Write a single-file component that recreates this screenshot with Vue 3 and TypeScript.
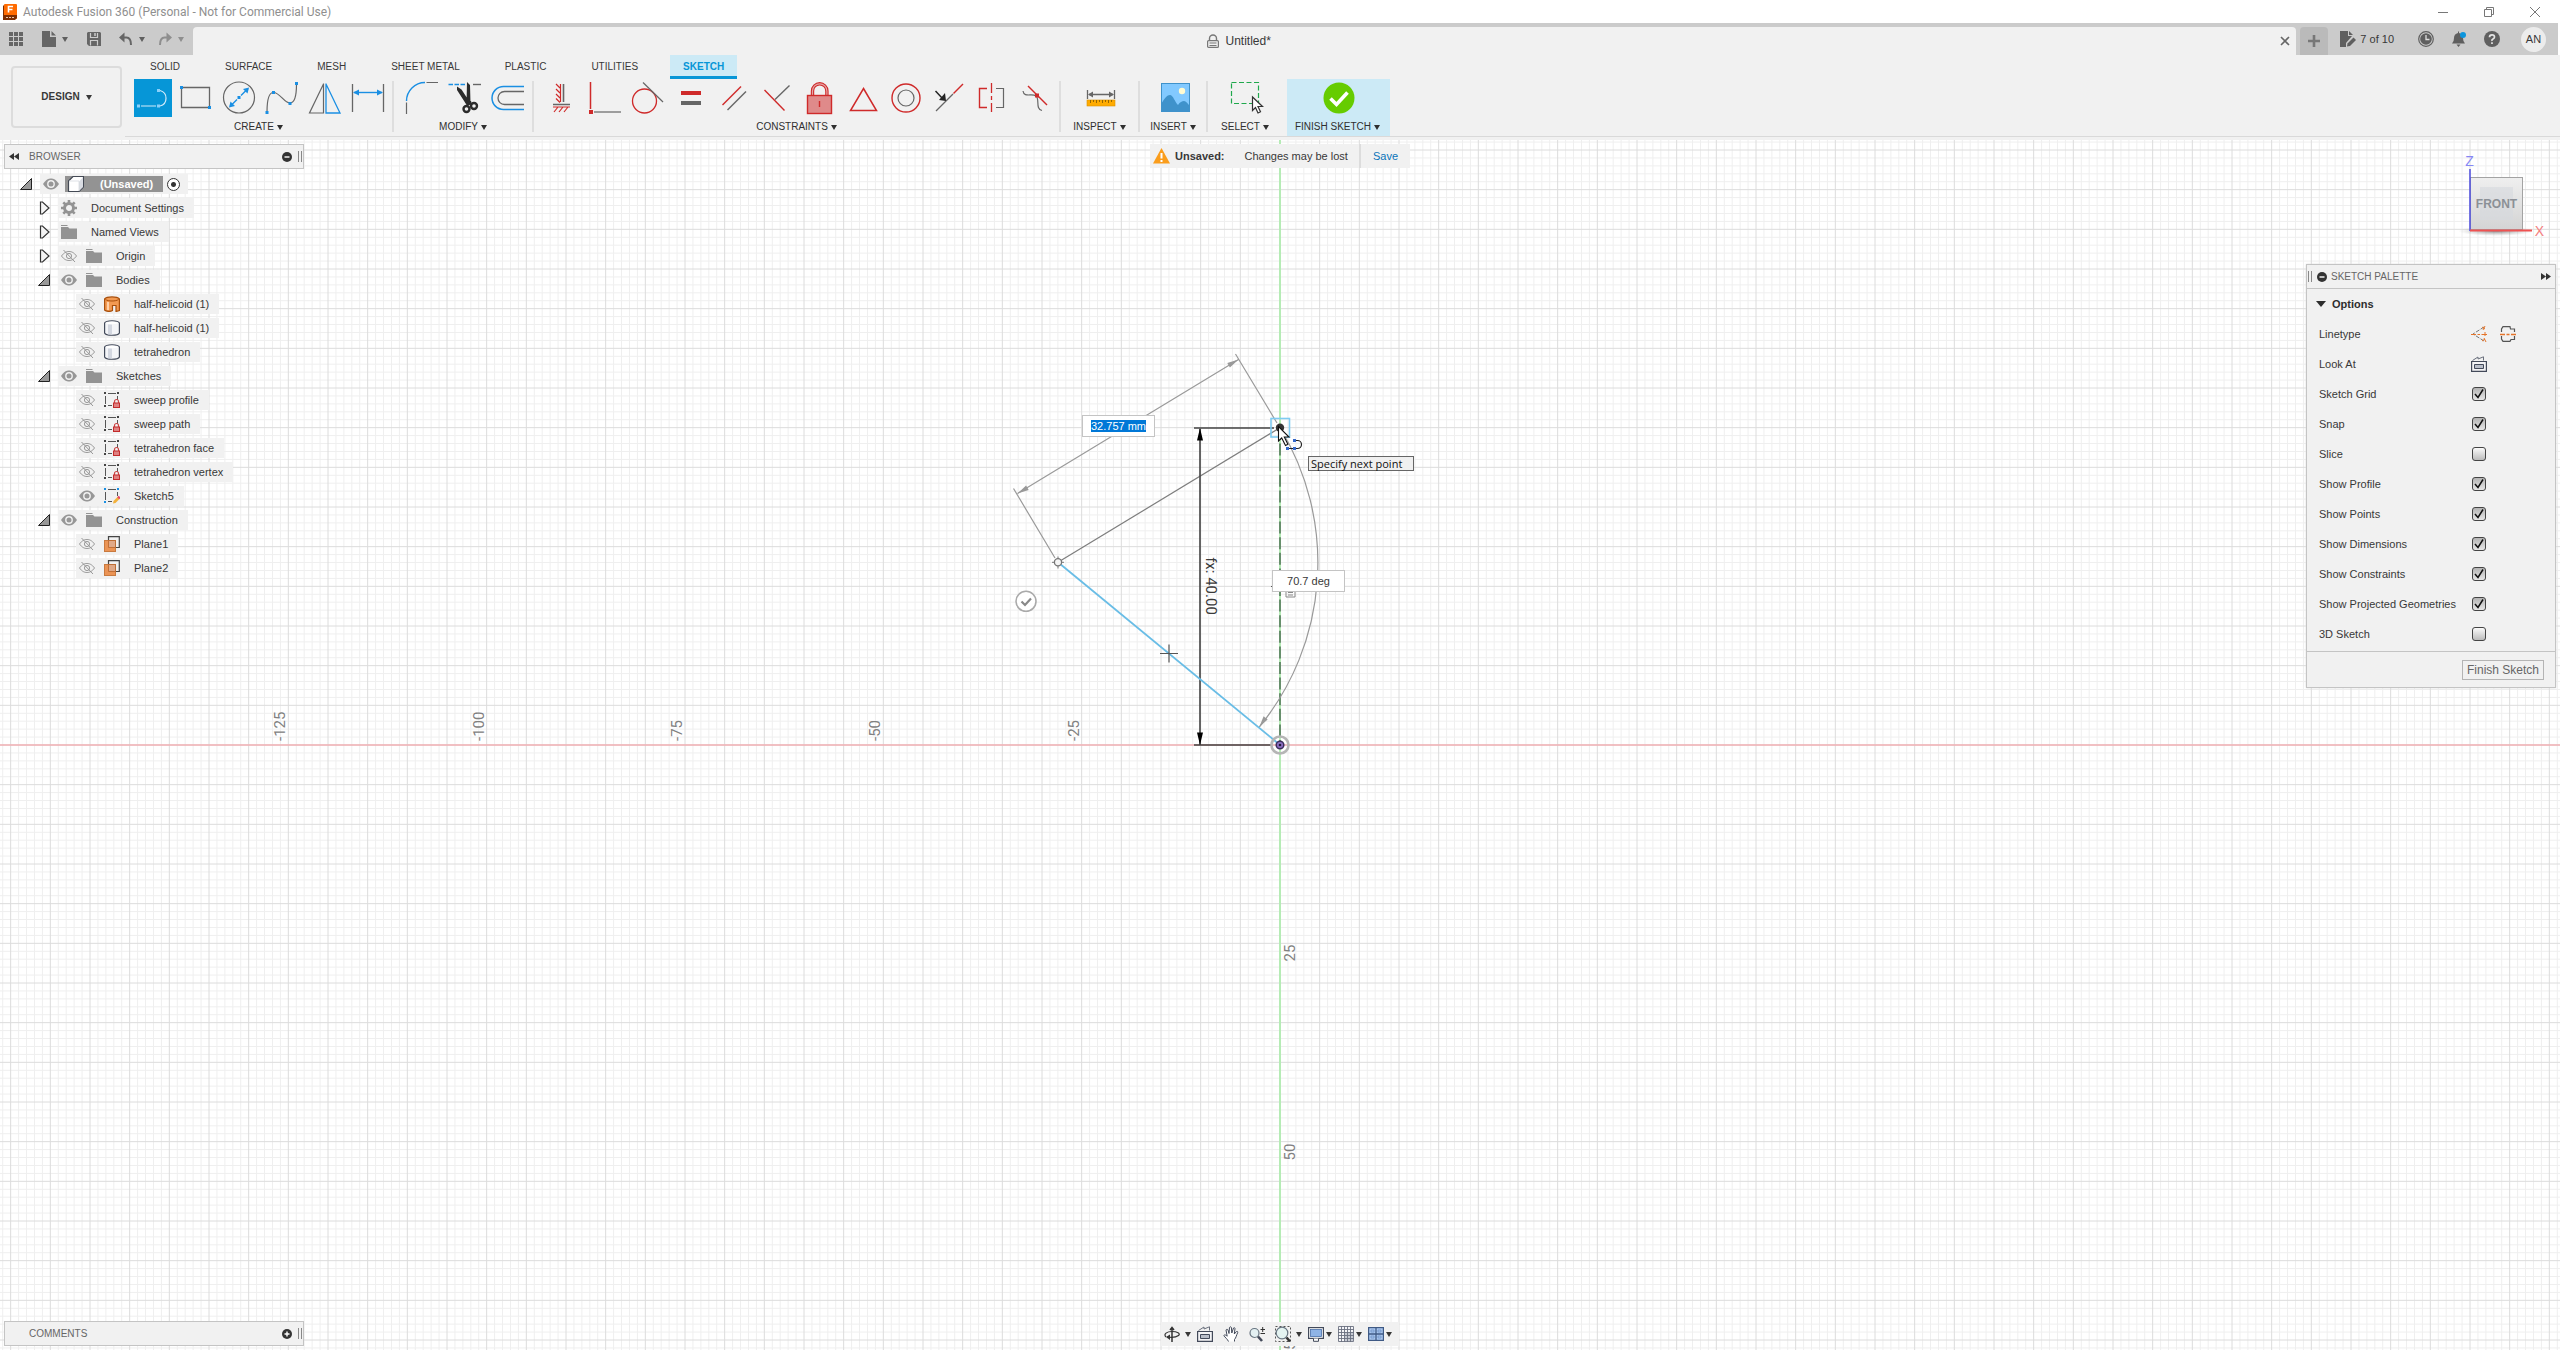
<script setup lang="ts">
import { ref, onMounted } from 'vue'

interface Tool { name: string; icon: string; active?: boolean }
interface Group { label: string; kind: string; tools: Tool[] }
interface Node {
  label: string; level: number; fold?: 'open' | 'closed'; eye?: 'on' | 'off'; icon: string
}

const B = '#1a8fe3'
const G = '#666'
const R = '#cf2a2a'
const sq = (x: number, y: number, c = B) => `<rect x="${x - 1.5}" y="${y - 1.5}" width="3" height="3" fill="${c}"/>`
const ln = (d: string, c = G, w = 1.2) => `<path d="${d}" fill="none" stroke="${c}" stroke-width="${w}"/>`

const t = (name: string, icon: string, active = false): Tool => ({ name, icon, active })

const groups: Group[] = [
  {
    label: 'CREATE', kind: 'wide', tools: [
      t('Line', ln('M7 27H22M26 11.500a8 8 0 0 1 0 15.500', '#d4ecfa') + sq(24.5, 11.5, '#8ad0fa') + sq(4.5, 27, '#8ad0fa') + sq(24.5, 27, '#8ad0fa'), true),
      t('Rectangle', ln('M4.500 8.500H32.500V28.500H4.500Z', G, 1.3) + sq(4.5, 8.5) + sq(32.5, 28.5)),
      t('Circle', ln('M34.500 18.500a15.500 15.500 0 1 1-31 0a15.500 15.500 0 1 1 31 0Z') + ln('M10 27.500L17 20.500M21 16.500L28 9.500', B, 1.4) + `<path d="M9 28.500l1.500-6 4.500 4.500ZM29 8.500l-1.500 6-4.500-4.500Z" fill="${B}"/>` + sq(19, 18.5)),
      t('Spline', ln('M4 33C4 20 6 13.500 10.500 13.500C17 13.500 21 24 27 24C32 24 33.500 14 33.500 5') + sq(4, 33.5) + sq(10.5, 13.5) + sq(27, 24.5) + sq(33.5, 4.5)),
      t('Mirror', ln('M17.500 4.500V34H3.500L17.500 5') + ln('M20 4.500V34H34L20 5', B, 1.3)),
      t('Sketch Dimension', ln('M3.500 5V33M34.500 5V33', G, 1.3) + ln('M5 13.500H33', B, 1.4) + `<path d="M4 13.500l6-3v6ZM34 13.500l-6-3v6Z" fill="${B}"/>`),
    ],
  },
  {
    label: 'MODIFY', kind: 'wide', tools: [
      t('Fillet', ln('M3.500 22A18.500 18.500 0 0 1 22 3.500', B, 1.4) + ln('M23.500 3.500H35M3.500 23.500V35')),
      t('Trim', ln('M2.500 5.500h4.500m1.500 0h4.500m1.500 0h4.500', B, 1.5) + ln('M27 5.500H35', G, 1.4)
        + '<path d="M11 7.500l4.500 3L23 22l-3 3-9-14Z M21 3l3 3 .5 18-4 2Z" fill="#2b2b2b"/><circle cx="20.500" cy="30" r="3" fill="none" stroke="#2b2b2b" stroke-width="2.400"/><circle cx="28" cy="27" r="3" fill="none" stroke="#2b2b2b" stroke-width="2.400" /><path d="M19 22l6 0 1 3-5 2Z" fill="#2b2b2b"/>'),
      t('Offset', ln('M35 7.500H14.500a11.500 11.500 0 0 0 0 23H35', B, 1.5) + ln('M35 12.500H15.500a6.500 6.500 0 0 0 0 13H35', G, 1.3)),
    ],
  },
  {
    label: 'CONSTRAINTS', kind: 'wide', tools: [
      t('Horizontal/Vertical', ln('M20.500 5V23M10 25.500H27', G, 1.6) + ln('M17.500 5V23M17 9l-4-4M17 14l-4-4M17 19l-4-4M17 23.500l-4-4M10 28H27M15 28l-4 5M20 28l-4 5M25 28l-4 5', R)),
      t('Coincident', ln('M4.500 3V30', R, 1.5) + `<rect x="3" y="31" width="4" height="4" fill="${R}"/>` + ln('M8 33H35')),
      t('Tangent', `<circle cx="15.500" cy="22" r="12" fill="none" stroke="${R}" stroke-width="1.300"/>` + ln('M14 3.500L34 23')),
      t('Equal', `<rect x="9" y="12" width="20" height="4" fill="${R}"/><rect x="9" y="22" width="20" height="4" fill="${G}"/>`),
      t('Parallel', ln('M7.500 26L26 7.500', R, 1.4) + ln('M12.500 31L31 12.500', G, 1.4)),
      t('Perpendicular', ln('M6.500 11L26.500 31.500', R, 1.4) + ln('M17 20.500L31.500 6.500', G, 1.4)),
      t('Fix/UnFix', ln('M11.500 16V12a7.200 7.200 0 0 1 14.400 0V16', R, 3.4) + ln('M11.500 16V12a7.200 7.200 0 0 1 14.400 0V16', '#e6a5a5', 1.2) + `<rect x="6.500" y="16.500" width="24" height="18" fill="#df8a8a" stroke="${R}" stroke-width="1.400"/>` + ln('M18.500 22V28', R, 1.4)),
      t('Midpoint Triangle', ln('M19.500 9.500L32.500 31.500H6.500Z', R, 1.5)),
      t('Concentric', `<circle cx="19" cy="19" r="14" fill="none" stroke="${R}" stroke-width="1.400"/><circle cx="19" cy="19" r="8" fill="none" stroke="${G}" stroke-width="1.200"/>`),
      t('Midpoint', ln('M6 32L23 15') + ln('M23.500 14.500L33 5', R, 1.4) + ln('M5.500 12L13 20', '#222', 1.5) + '<path d="M16 22l-1-8-6 7Z" fill="#222"/>'),
      t('Symmetry', ln('M14 9.500H6.500V28.500H14', R, 1.4) + ln('M23 9.500H30.500V28.500H23') + ln('M18.500 4v10m0 3v4m0 3v9', R, 1.3)),
      t('Curvature', ln('M7 12C8 19 16 14 20 17C24 20 19 30 26 31.500') + ln('M12 7L31 26', R, 1.4) + `<rect x="19" y="14.500" width="4" height="4" fill="${R}"/>`),
    ],
  },
  {
    label: 'INSPECT', kind: 'inspect', tools: [
      t('Measure', ln('M5.500 11V20M32.500 11V20M7 15.500H31', G, 1.3) + '<path d="M6 15.500l5-3v6ZM32 15.500l-5-3v6Z" fill="#666"/><rect x="5" y="21" width="28" height="6" fill="#ffab00" stroke="#d99100" stroke-width=".6"/>' + ln('M8.500 21v3m3-3v2m3-2v3m3-3v2m3-2v3m3-3v2m3-2v3m3-3v2', '#8a5d00', .9)),
    ],
  },
  {
    label: 'INSERT', kind: 'insert', tools: [
      t('Insert Canvas', '<rect x="5" y="4" width="29" height="29" fill="#82c9ff"/><path d="M5 25C9 19 11 16 14 16S19 23 22 26C24 23 26 22 28 22S32 25 34 27V33H5Z" fill="#3f92cb"/><rect x="5.500" y="4.500" width="28" height="28" fill="none" stroke="#3f92cb"/><circle cx="26" cy="12" r="3.200" fill="#fffbd2"/>'),
    ],
  },
  {
    label: 'SELECT', kind: 'select', tools: [
      t('Select', '<rect x="3.500" y="3.500" width="27" height="21" fill="none" stroke="#1fa84c" stroke-width="1.200" stroke-dasharray="5 2.500"/><path d="M24.500 18V31.500l3-3 2.500 5.500 2.500-1.200-2.500-5.300h4.500Z" fill="#fff" stroke="#333" stroke-width="1.200"/>'),
    ],
  },
  {
    label: 'FINISH SKETCH', kind: 'finish', tools: [
      t('Finish Sketch', '<circle cx="19" cy="19" r="15.500" fill="#66cc00"/><path d="M10.500 19.500l6 6L27.500 13.500" fill="none" stroke="#fff" stroke-width="3.600"/>'),
    ],
  },
]

const tabs = ['SOLID', 'SURFACE', 'MESH', 'SHEET METAL', 'PLASTIC', 'UTILITIES', 'SKETCH']

const lockSketch = ln('M4 1.500H12M1.500 4V12M13.500 4V8M4 13.500H8', '#555', 1)
  + '<path d="M0 0h2v2H0ZM13 0h2v2h-2ZM0 13h2v2H0Z" fill="#444"/>'
  + '<path d="M10.500 11V9.500a2 2 0 0 1 4 0V11" fill="none" stroke="#c44" stroke-width="1.200"/><rect x="9.500" y="11" width="6" height="4.500" fill="#df8080" stroke="#c22b2b"/>'
const body = '<path d="M.6 3C2 0 14 0 15.400 3V13C14 16 2 16 .6 13Z" fill="#f4f5f8" stroke="#434a5a" stroke-width="1.200"/><path d="M4 4.500H8V14.500H4Z" fill="#d3d7e0"/><path d="M1.600 3C4 4.600 12 4.600 14.400 3C12 1.200 4 1.200 1.600 3Z" fill="#fff"/>'
const treeIcons: Record<string, string> = {
  cube: '<path d="M.5 5L5 .5H15.500V11L11 15.500H.5Z" fill="#fff" stroke="#444a55" stroke-width="1.200"/><path d="M11 5.500L15 1.500V11L11 15Z" fill="#d9dce2"/><path d="M1 5H11V15" fill="none" stroke="#d6d9e0" stroke-width=".8"/>',
  gear: '<circle cx="8" cy="8" r="4.500" fill="none" stroke="#939393" stroke-width="3"/><path d="M8 0V3M8 13V16M0 8H3M13 8H16M2.300 2.300L4.500 4.500M11.500 11.500L13.700 13.700M2.300 13.700L4.500 11.500M11.500 4.500L13.700 2.300" stroke="#939393" stroke-width="2.600"/>',
  folder: '<path d="M0 3H7L8.500 4.500H16V15H0Z" fill="#939393"/><path d="M0 1.500H6.500" stroke="#939393" stroke-width="1"/>',
  surface: '<path d="M.6 3C3 .2 13 .2 15.400 3V14.500L12 15.500V9.500H8.500V14.500C6 16 2 15.500 .6 14Z" fill="#f39a52" stroke="#a94f0b" stroke-width="1.200"/><path d="M1.500 3.500C4 5.500 12 5.500 14.500 3.500" fill="none" stroke="#a94f0b"/><path d="M4 6V14" stroke="#ffd0a8" stroke-width="2"/>',
  body,
  sketch: lockSketch,
  edit: ln('M4 1.500H12M1.500 4V12M13.500 4V8M4 13.500H8', '#555', 1) + `<path d="M0 0h2v2H0ZM13 0h2v2h-2ZM0 13h2v2H0Z" fill="${B}"/>` + '<path d="M9 15.500l.5-2.500L14 8.500l2 2L11.500 15Z" fill="#f3b13c"/><path d="M13.200 9.300L14.700 7.800l2 2L15.200 11.300Z" fill="#e5486b"/>',
  plane: '<path d="M4.500 4V.700H15.300V11.500H12" fill="none" stroke="#444" stroke-width="1.200"/><rect x=".5" y="4.500" width="11" height="11" fill="#eb9455" stroke="#c97a3f"/><path d="M4.500 4.500H11.500V11.500H4.500Z" fill="#e0a988" stroke="#b8642a" stroke-width=".8"/>',
}

const nodes: Node[] = [
  { label: 'Document Settings', level: 1, fold: 'closed', icon: 'gear' },
  { label: 'Named Views', level: 1, fold: 'closed', icon: 'folder' },
  { label: 'Origin', level: 1, fold: 'closed', eye: 'off', icon: 'folder' },
  { label: 'Bodies', level: 1, fold: 'open', eye: 'on', icon: 'folder' },
  { label: 'half-helicoid (1)', level: 2, eye: 'off', icon: 'surface' },
  { label: 'half-helicoid (1)', level: 2, eye: 'off', icon: 'body' },
  { label: 'tetrahedron', level: 2, eye: 'off', icon: 'body' },
  { label: 'Sketches', level: 1, fold: 'open', eye: 'on', icon: 'folder' },
  { label: 'sweep profile', level: 2, eye: 'off', icon: 'sketch' },
  { label: 'sweep path', level: 2, eye: 'off', icon: 'sketch' },
  { label: 'tetrahedron face', level: 2, eye: 'off', icon: 'sketch' },
  { label: 'tetrahedron vertex', level: 2, eye: 'off', icon: 'sketch' },
  { label: 'Sketch5', level: 2, eye: 'on', icon: 'edit' },
  { label: 'Construction', level: 1, fold: 'open', eye: 'on', icon: 'folder' },
  { label: 'Plane1', level: 2, eye: 'off', icon: 'plane' },
  { label: 'Plane2', level: 2, eye: 'off', icon: 'plane' },
]

const eyes = {
  on: '<path d="M0 8C3 3.500 5.500 2.500 8 2.500S13 3.500 16 8C13 12.500 10.500 13.500 8 13.500S3 12.500 0 8Z" fill="#979797"/><circle cx="8" cy="8" r="3.200" fill="#979797" stroke="#f1f1f1" stroke-width="1.400"/>',
  off: '<path d="M.5 8C3 4.500 5.500 3.500 8 3.500S13 4.500 15.500 8C13 11.500 10.500 12.500 8 12.500S3 11.500 .5 8Z" fill="none" stroke="#8f8f8f" stroke-width=".9"/><circle cx="8" cy="8" r="2.600" fill="none" stroke="#8f8f8f" stroke-width=".9"/><path d="M2.500 2L14 14" stroke="#8f8f8f" stroke-width=".9"/>',
}

const options = ref([
  { id: 'grid', label: 'Sketch Grid', on: true },
  { id: 'snap', label: 'Snap', on: true },
  { id: 'slice', label: 'Slice', on: false },
  { id: 'profile', label: 'Show Profile', on: true },
  { id: 'points', label: 'Show Points', on: true },
  { id: 'dims', label: 'Show Dimensions', on: true },
  { id: 'cons', label: 'Show Constraints', on: true },
  { id: 'proj', label: 'Show Projected Geometries', on: true },
  { id: 'three', label: '3D Sketch', on: false },
])

const lookAt = '<path d="M.6 5.500H15.400V15.400H.6Z" fill="#f4f4f6" stroke="#434a5a" stroke-width="1.200"/><path d="M3.500 8.500H12.500V12.500H3.500Z" fill="#b9bec9" stroke="#434a5a"/><path d="M1.500 4.500L7 1V3L12.500 .8V4.500" fill="none" stroke="#6a707d"/>'
const navTools = [
  { name: 'Orbit', drop: true, gap: 5, icon: '<path d="M8 16V2M6 4L8 1.500 10 4" fill="none" stroke="#333" stroke-width="1.500"/><path d="M2 11C-1 8 3 5.500 8 5.500S17 7.500 14.500 9.500 6 11.500 3 11" fill="none" stroke="#333" stroke-width="1.200"/><path d="M6 8.500V14L2 11Z" fill="#333"/>' },
  { name: 'Look At', drop: false, gap: 0, icon: lookAt },
  { name: 'Pan', drop: false, gap: 0, icon: '<path d="M5.500 15.500C4.500 13 2 11.500 .8 9.500C1.500 8.500 3 9 4.200 10.200L3 4C3.500 3 4.500 3 5 4L6 7.500 6.500 1.500C7 .6 8 .6 8.400 1.500L8.800 7 10.500 2C11.200 1.300 12 1.700 12 2.600L11.300 8 13.500 5.500C14.500 5 15 5.800 14.700 6.600C13.500 9 13 12 11.500 13.500V15.500" fill="#fff" stroke="#434a5a"/>' },
  { name: 'Zoom', drop: false, gap: 0, icon: '<circle cx="5.500" cy="7" r="4.500" fill="#e4f1f3" stroke="#687581" stroke-width="1.200"/><path d="M9 10.500L13 15" stroke="#434a5a" stroke-width="2.600"/><path d="M11.500 3.500H16M13.700 1V6M11.500 7.500H16" stroke="#333"/>' },
  { name: 'Fit', drop: true, gap: 5, icon: '<path d="M.5 .5H15.500V15.500H.5Z" fill="none" stroke="#555" stroke-dasharray="2 2"/><circle cx="7" cy="7" r="5.800" fill="#e4f3f1" stroke="#687581" stroke-width="1.200"/><path d="M11.500 11.500L15 15.500" stroke="#333" stroke-width="2.600"/>' },
  { name: 'Display Settings', drop: true, gap: 2, icon: '<rect x=".6" y="1.600" width="14.800" height="10.800" fill="#fff" stroke="#434a5a" stroke-width="1.200"/><rect x="2.500" y="3.500" width="11" height="7" fill="#8fb4e6" stroke="#4a6fa8" stroke-width=".8"/><path d="M5.500 12.500V15.300H10.500V12.500" fill="#fff" stroke="#434a5a"/>' },
  { name: 'Grid and Snaps', drop: true, gap: 2, icon: '<path d="M.5 .5H15.500V15.500H.5Z" fill="#f4f5f8"/><path d="M6 6H15V15H6Z" fill="#c6cad3"/><path d="M.5 .5H15.500V15.500H.5ZM3.500 0V16M6.500 0V16M9.500 0V16M12.500 0V16M0 3.500H16M0 6.500H16M0 9.500H16M0 12.500H16" fill="none" stroke="#6b7080" stroke-width=".9"/>' },
  { name: 'Viewports', drop: true, gap: 2, icon: '<rect x=".6" y="1.600" width="14.800" height="12.800" fill="#a9c6ee" stroke="#3f5a85" stroke-width="1.200"/><path d="M8 1.500V14.500M.5 8H15.500" stroke="#3f5a85" stroke-width="1.300"/><path d="M3 4H6V6H3ZM10 4H13V6H10ZM3 10H6V12H3ZM10 10H13V12H10Z" fill="none" stroke="#6f92c7" stroke-width=".8"/>' },
]

/* 5 mm grid squares, each split in five; 119 px cover 15 mm */
const STEP = 119 / 15
const gridPath = (major: boolean) => {
  let d = ''
  for (let i = -240; i <= 240; i++) {
    if ((i % 5 === 0) !== major) continue
    const p = (i * STEP).toFixed(2)
    d += `M${p} -1500V1500M-2000 ${p}H2000`
  }
  return d
}
const minorGrid = gridPath(false)
const majorGrid = gridPath(true)
const xLabels = [-125, -100, -75, -50, -25].map(v => ({ v, x: Math.round(v * STEP) - 9 }))
const zLabels = [25, 50, 75].map(v => ({ v, y: Math.round(v * STEP) + 10 }))

const lengthBox = ref<HTMLInputElement | null>(null)
onMounted(() => {
  lengthBox.value?.focus()
  lengthBox.value?.select()
})
</script>

<template>
  <div class="app">
    <header class="titlebar">
      <svg class="logo" viewBox="0 0 14 16" width="14" height="16">
        <rect x="1" y="0" width="13" height="15" rx="1" fill="#ff6b00" />
        <path d="M1 1L0 2V16H12L14 14V11H1Z" fill="#7c2d00" />
        <path d="M5.500 8.500V2.500H10M5.500 5.500H9.500" fill="none" stroke="#fff" stroke-width="1.600" />
        <path d="M3 13.500H11" stroke="#e9c5ae" stroke-dasharray="2 1" />
      </svg>
      <h1>Autodesk Fusion 360 (Personal - Not for Commercial Use)</h1>
      <div class="winbtns">
        <button aria-label="Minimize"><svg width="12" height="12"><path d="M1 6.500H11" stroke="#777" /></svg></button>
        <button aria-label="Restore"><svg width="12" height="12"><path d="M1.500 3.500H8.500V10.500H1.500ZM3.500 3V1.500H10.500V8.500H9" fill="none" stroke="#777" /></svg></button>
        <button aria-label="Close"><svg width="12" height="12"><path d="M1 1L11 11M11 1L1 11" stroke="#777" /></svg></button>
      </div>
    </header>

    <div class="strip">
      <div class="quick">
        <button aria-label="Data panel"><svg width="14" height="14"><path d="M0 0h4v4H0ZM5 0h4v4H5ZM10 0h4v4h-4ZM0 5h4v4H0ZM5 5h4v4H5ZM10 5h4v4h-4ZM0 10h4v4H0ZM5 10h4v4H5ZM10 10h4v4h-4Z" fill="#666" /></svg></button>
        <button class="file" aria-label="File">
          <svg width="14" height="16"><path d="M0 0H8V6H14V16H0ZM9.500 0L14 4.500H9.500Z" fill="#666" /></svg>
          <i class="caret"></i>
        </button>
        <button class="save" aria-label="Save"><svg width="14" height="14"><path d="M0 1L1 0H13L14 1V14H2L0 12Z" fill="#666" /><path d="M3.500 1V5.500H10.500V1M3.500 13.500V8.500H10.500V13.500" fill="none" stroke="#ccc" stroke-width="1.200" /><path d="M8 1V4" stroke="#ccc" stroke-width="1.500" /></svg></button>
        <button class="undo" aria-label="Undo">
          <svg width="14" height="14"><path d="M2 5.500H7.500Q12 5.500 12 13" fill="none" stroke="#666" stroke-width="2" /><path d="M0 5.500L5.500 .5V10.500Z" fill="#666" /></svg>
          <i class="caret"></i>
        </button>
        <button class="redo" aria-label="Redo">
          <svg width="14" height="14"><path d="M12 5.500H6.500Q2 5.500 2 13" fill="none" stroke="#8e8e8e" stroke-width="2" /><path d="M14 5.500L8.500 .5V10.500Z" fill="#8e8e8e" /></svg>
          <i class="caret"></i>
        </button>
      </div>
      <div class="doctab">
        <span class="docname">
          <svg width="12" height="14"><path d="M2.500 6V4.500a3.500 3.500 0 0 1 7 0V6" fill="none" stroke="#777" stroke-width="1.400" /><rect x=".6" y="6.600" width="10.800" height="6.800" rx="1" fill="none" stroke="#777" stroke-width="1.200" /><path d="M2.500 9H9.500M2.500 11.500H9.500" stroke="#777" stroke-width="1.200" /></svg>
          Untitled*
        </span>
        <button class="closetab" aria-label="Close tab"><svg width="10" height="10"><path d="M1 1L9 9M9 1L1 9" stroke="#666" stroke-width="1.600" /></svg></button>
      </div>
      <button class="plus" aria-label="New design"><svg width="14" height="14"><path d="M7 1V13M1 7H13" stroke="#777" stroke-width="2.600" /></svg></button>
      <div class="status">
        <button class="docs">
          <svg width="16" height="16"><path d="M0 0H8V5H12L6 12V16H0ZM9 0L13 4H9Z" fill="#5f5f5f" /><path d="M7 15.500L7.500 12.500 13.500 6.500 16 9 10 15Z" fill="#5f5f5f" /></svg>
          7 of 10
        </button>
        <button aria-label="Job status"><svg width="16" height="16"><circle cx="8" cy="8" r="7.300" fill="none" stroke="#5f5f5f" stroke-width="1.200" /><circle cx="8" cy="8" r="5.800" fill="#5f5f5f" /><path d="M8 4V8.500H11.500" fill="none" stroke="#ddd" stroke-width="1.300" /></svg></button>
        <button aria-label="Notifications"><svg width="16" height="16"><path d="M1 12.500Q3 11 3 7Q3 3 7 2V.5H8V2Q12 3 12 7Q12 11 14 12.500ZM5.500 13.500H9.500L7.500 16Z" fill="#5f5f5f" /><circle cx="12" cy="4" r="3" fill="#0c95dd" /></svg></button>
        <button aria-label="Help" class="help"><svg width="16" height="16"><circle cx="8" cy="8" r="8" fill="#5f5f5f" /><path d="M5.500 6.200Q5.500 3.800 8 3.800T10.500 6Q10.500 7.200 9 8T8 10M8 11.200V13" fill="none" stroke="#e4e4e4" stroke-width="1.700" /></svg></button>
        <button class="avatar">AN</button>
      </div>
    </div>

    <section class="ribbon">
      <button class="workspace">DESIGN <i class="caret"></i></button>
      <div class="ribbon-main">
        <nav class="tabs">
          <button v-for="tab in tabs" :key="tab" :class="{ current: tab === 'SKETCH' }">{{ tab }}</button>
        </nav>
        <div class="groups">
          <div v-for="g in groups" :key="g.label" class="group" :class="g.kind">
            <div class="tools">
              <button v-for="tool in g.tools" :key="tool.name" :aria-label="tool.name">
                <svg width="38" height="38" :class="{ active: tool.active }" v-html="tool.icon"></svg>
              </button>
            </div>
            <button class="grouplabel">{{ g.label }} <i class="caret"></i></button>
          </div>
        </div>
      </div>
    </section>

    <main class="canvas">
      <svg class="drawing" width="100%" height="100%">
        <svg x="50%" y="50%" overflow="visible">
          <path :d="minorGrid" stroke="#efefef" />
          <path :d="majorGrid" stroke="#dcdcdc" />
          <path d="M-2000 0H2000" stroke="#f2b0b4" stroke-width="1.500" />
          <path d="M0 -1500V1500" stroke="#b5ebb5" stroke-width="2" />
          <g class="ruler">
            <text v-for="l in xLabels" :key="l.v" :transform="`translate(${l.x + 6} -4) rotate(-90)`">{{ l.v }}</text>
            <text v-for="l in zLabels" :key="l.v" text-anchor="middle" :transform="`translate(15 ${l.y}) rotate(-90)`">{{ l.v }}</text>
          </g>

          <path d="M0 -317V0" stroke="#678f6c" stroke-width="2" stroke-dasharray="12 3.600" />
          <path d="M-9 -158.500H9" stroke="#555" />
          <path d="M6 -155h9v7H6ZM8 -152.500h5M8 -150h5" fill="none" stroke="#888" />
          <path d="M-266.500 -256.500L-225 -187M-44.500 -391L-3 -322M-262.500 -251.500L-41.500 -385.500" stroke="#9a9a9a" stroke-width="1.200" />
          <path d="M-262.500 -251.500l8.600 -8 2.600 4.400ZM-41.500 -385.500l-8.600 8 -2.600 -4.400Z" fill="#999" />
          <path d="M0 -317.300A259.600 259.600 0 0 1 -20.700 -18" fill="none" stroke="#999" stroke-width="1.200" />
          <path d="M-20.700 -18l4.300 -10.800 4 3.200Z" fill="#999" />
          <path d="M-222 -182.700L0 -317.300" stroke="#7d7d7d" stroke-width="1.200" />
          <path d="M-86 -317H-6M-86 0H-8M-80 -316V0" stroke="#444" stroke-width="1.600" />
          <path d="M-80 -317l-3 12.500h6ZM-80 0l-3 -12.500h6Z" fill="#000" />
          <path d="M-222 -182.700L0 0" stroke="#69bde6" stroke-width="1.800" />
          <path d="M-120 -91.500h18M-111 -100.500v18" stroke="#555" stroke-width="1.200" />
          <circle cx="-222" cy="-182.700" r="3.600" fill="#f5f5f5" stroke="#777" stroke-width="1.300" />
          <path d="M-228 -182.700h2.500M-218.500 -182.700h2.500M-222 -188.500v2.500M-222 -179v2.500" stroke="#777" />
          <circle cx="-254" cy="-143.700" r="10" fill="#fff" stroke="#aaa" stroke-width="1.600" />
          <path d="M-258.500 -143.500l3.500 3.500 6 -6.500" fill="none" stroke="#888" stroke-width="2.200" />
          <text class="dim" text-anchor="middle" transform="translate(-74 -159) rotate(90)">fx: 40.00</text>
          <circle cx="0" cy="0" r="8.500" fill="none" stroke="#b5b5b5" stroke-width="2.600" />
          <circle cx="0" cy="0" r="3.800" fill="#8d6fc4" stroke="#3c2e5c" stroke-width="1.500" />
          <circle cx="0" cy="0" r="1.300" fill="#221a38" />
          <circle cx="0" cy="-317.300" r="4.200" fill="#333" />
          <rect x="-9" y="-326.500" width="18.500" height="18.500" fill="none" stroke="#7fcbf2" stroke-width="1.600" />
          <path d="M-1.500 -318.500V-304l3.200 -3 3.800 7.500 2.400 -1.200 -3.600 -7.300h4.700Z" fill="#fff" stroke="#111" stroke-width="1.100" />
          <path d="M8 -296.500H15M15 -304.500h2.500a4 4 0 0 1 0 8H15" fill="none" stroke="#222" stroke-width="1.200" />
          <path d="M6 -298h3v3H6ZM13 -298h3v3H13ZM13 -306h3v3H13Z" fill="#3568c9" />
        </svg>
      </svg>

      <input ref="lengthBox" class="measure length" aria-label="Length" value="32.757 mm">
      <input class="measure angle" aria-label="Angle" value="70.7 deg">
      <div class="hint" role="tooltip">Specify next point</div>

      <div class="unsaved">
        <svg width="17" height="16"><path d="M8.500 0L17 15.500H0Z" fill="#fa9d1c" /><path d="M8.500 5V10.500M8.500 12V14" stroke="#fff" stroke-width="2" /></svg>
        <strong>Unsaved:</strong>
        <span>Changes may be lost</span>
        <a href="#">Save</a>
      </div>

      <aside class="browser">
        <div class="panelhead">
          <svg class="chev" width="10" height="7"><path d="M5 0V7L0 3.500ZM10 0V7L5 3.500Z" fill="#333" /></svg>
          <span>BROWSER</span>
          <button aria-label="Collapse"><svg width="10" height="10"><circle cx="5" cy="5" r="5" fill="#333" /><path d="M2.500 5H7.500" stroke="#fff" stroke-width="1.400" /></svg></button>
          <i class="grip"></i>
        </div>
        <ul class="tree">
          <li class="root">
            <svg class="fold" width="12" height="12"><path d="M11.500 .5V11.500H.5Z" fill="#999" stroke="#222" /></svg>
            <span class="row">
              <svg width="16" height="16" v-html="eyes.on"></svg>
              <span class="chip"><svg width="16" height="16" v-html="treeIcons.cube"></svg><b>(Unsaved)</b></span>
              <input type="radio" checked aria-label="Activate component">
            </span>
          </li>
          <li v-for="(n, i) in nodes" :key="i" :class="'level' + n.level">
            <svg v-if="n.fold === 'open'" class="fold" width="12" height="12"><path d="M11.500 .5V11.500H.5Z" fill="#999" stroke="#222" /></svg>
            <svg v-if="n.fold === 'closed'" class="fold" width="12" height="14"><path d="M2.500 1H4.500L11 7L4.500 13H2.500Z" fill="#f4f4f4" stroke="#333" stroke-width="1.200" /></svg>
            <span class="row">
              <svg v-if="n.eye" width="16" height="16" v-html="eyes[n.eye]"></svg>
              <svg width="16" height="16" v-html="treeIcons[n.icon]"></svg>
              <span class="label">{{ n.label }}</span>
            </span>
          </li>
        </ul>
      </aside>

      <div class="viewcube">
        <svg width="100" height="90">
          <defs>
            <linearGradient id="face" x1="0" y1="0" x2="0" y2="1"><stop offset="0" stop-color="#efefef" /><stop offset="1" stop-color="#d4d4d4" /></linearGradient>
            <radialGradient id="shade"><stop offset="0" stop-color="#555" stop-opacity=".7" /><stop offset="1" stop-color="#999" stop-opacity="0" /></radialGradient>
          </defs>
          <ellipse cx="46" cy="76" rx="38" ry="5" fill="url(#shade)" />
          <rect x="20.500" y="22.500" width="52" height="52" fill="url(#face)" stroke="#a3a3a3" />
          <rect x="30" y="32" width="33" height="33" fill="#d5d9de" opacity=".6" />
          <path d="M20 14V76" stroke="#5656e0" stroke-width="1.600" />
          <path d="M20 75.500H82" stroke="#ef5252" stroke-width="2" />
          <text x="46.500" y="53" text-anchor="middle" fill="#8b9096" font-weight="700">FRONT</text>
          <text class="axis" x="19.500" y="11" text-anchor="middle" fill="#8686f5">Z</text>
          <text class="axis" x="89.500" y="81" text-anchor="middle" fill="#f57f7f">X</text>
        </svg>
      </div>

      <aside class="palette">
        <div class="palhead">
          <i class="grip"></i>
          <button aria-label="Collapse"><svg width="10" height="10"><circle cx="5" cy="5" r="5" fill="#333" /><path d="M2.500 5H7.500" stroke="#fff" stroke-width="1.400" /></svg></button>
          <span>SKETCH PALETTE</span>
          <svg width="10" height="7"><path d="M0 0V7L5 3.500ZM5 0V7L10 3.500Z" fill="#333" /></svg>
        </div>
        <h2><i class="caret"></i>Options</h2>
        <div class="opt">
          <span>Linetype</span>
          <button aria-label="Construction"><svg width="16" height="16"><path d="M13 1L2 8L13 15" fill="none" stroke="#777" stroke-dasharray="4 1.500" /><path d="M0 8.500H5M6.500 8.500H9M10.500 8.500H16M11 1l3 2M14 0l-2 4M11 15l3 -2M13 12l2 4M14 6V10" fill="none" stroke="#e5752b" /></svg></button>
          <button aria-label="Centerline" class="second"><svg width="16" height="16"><path d="M1.500 6V3L3 .6H10L10.500 3H14.500V6M1.500 10V13L3 15.400H10L11 13.500H14.500V10" fill="none" stroke="#555" stroke-width="1.200" /><path d="M0 8.500H5M6.500 8.500H9.500M11 8.500H16" stroke="#e5752b" stroke-width="1.300" /></svg></button>
        </div>
        <div class="opt">
          <span>Look At</span>
          <button aria-label="Look At"><svg width="16" height="16" v-html="lookAt"></svg></button>
        </div>
        <div v-for="o in options" :key="o.id" class="opt">
          <label :for="o.id">{{ o.label }}</label>
          <input :id="o.id" v-model="o.on" type="checkbox">
        </div>
        <div class="palfoot"><button>Finish Sketch</button></div>
      </aside>

      <div class="panelhead comments">
        <span>COMMENTS</span>
        <button aria-label="Expand"><svg width="10" height="10"><circle cx="5" cy="5" r="5" fill="#333" /><path d="M2.500 5H7.500M5 2.500V7.500" stroke="#fff" stroke-width="1.400" /></svg></button>
        <i class="grip"></i>
      </div>

      <div class="navbar">
        <button v-for="n in navTools" :key="n.name" :aria-label="n.name" :class="{ drop: n.drop }" :style="{ gap: n.gap + 'px' }">
          <svg width="16" height="16" v-html="n.icon"></svg>
          <i v-if="n.drop" class="caret"></i>
        </button>
      </div>
    </main>
  </div>
</template>

<style>
body { margin: 0; }
</style>

<style scoped>
* { box-sizing: border-box; }
.app {
  display: flex; flex-direction: column; height: 100vh; min-height: 760px; overflow: hidden;
  font: 11px/16px "Liberation Sans", Arial, sans-serif; color: #383838; background: #fff;
}
button { display: flex; align-items: center; padding: 0; border: 0; background: none; font: inherit; color: inherit; }
svg { display: block; flex: none; }
.caret { display: block; flex: none; border: 3px solid transparent; border-top: 5px solid currentColor; border-bottom: 0; }

.titlebar { display: flex; align-items: center; height: 23px; flex: none; padding: 0 2px 0 3px; }
.titlebar h1 { flex: 1; margin: 0 0 0 6px; font: 400 12px/16px Roboto, sans-serif; color: #8f8f8f; }
.winbtns { display: flex; }
.winbtns button { width: 46px; height: 20px; justify-content: center; }

.strip { display: flex; height: 32px; flex: none; margin-right: 2px; background: #cbcbcb; }
.quick { display: flex; align-items: center; width: 193px; padding-left: 9px; color: #5f5f5f; }
.quick button { gap: 6px; }
.quick .file { margin-left: 19px; }
.quick .save { margin-left: 19px; }
.quick .undo, .quick .redo { margin-left: 18px; }
.quick .redo { margin-left: 13px; color: #8e8e8e; }
.doctab { flex: 1; display: flex; align-items: center; margin-top: 4px; background: #f1f1f1; border-radius: 4px 4px 0 0; }
.docname { flex: 1; display: flex; align-items: center; justify-content: center; gap: 7px; padding-left: 4px; font-size: 12px; }
.closetab { margin-right: 6px; }
.plus { width: 28px; margin: 4px 0 0 4px; justify-content: center; background: #bababa; border-radius: 4px 4px 0 0; }
.status { display: flex; align-items: center; gap: 17px; padding: 0 12px; }
.docs { gap: 4px; margin-right: 7px; }
.avatar { width: 25px; height: 25px; margin-left: 4px; justify-content: center; border-radius: 50%; background: #ececec; }

.ribbon { display: flex; flex: none; height: 85px; padding-left: 11px; background: #f1f1f1; }
.workspace { width: 111px; height: 62px; margin: 11px 3px 0 0; justify-content: center; gap: 6px; border: 2px solid #dcdcdc; border-radius: 4px; font-size: 10px; font-weight: 700; }
.ribbon-main { flex: 1; height: 82px; border-bottom: 1px solid #d9d9d9; }
.tabs { display: flex; gap: 19px; height: 24px; padding-left: 12px; font-size: 10px; }
.tabs button { padding: 0 13px; }
.tabs .current { background: #cceaf6; color: #0696d7; font-weight: 700; box-shadow: inset 0 -3px #0696d7; }
.groups { display: flex; }
.group { position: relative; display: flex; flex-direction: column; align-items: center; height: 57px; padding: 0 5px 0 6px; }
.group.wide, .group.inspect, .group.insert { background: linear-gradient(#dedede, #dedede) right 2px / 2px 51px no-repeat; }
.tools { display: flex; }
.tools button { width: 43px; height: 38px; justify-content: center; }
.tools .active { background: #0696d7; }
.group.inspect { width: 79px; }
.group.insert { width: 68px; }
.group.select { width: 79px; padding-right: 8px; }
.group.finish { width: 103px; background: #cceaf6; }
.grouplabel { gap: 3px; margin-top: 2px; padding-right: 3px; font-size: 10px; color: #2f2f2f; white-space: nowrap; }

.canvas { position: relative; flex: 1; overflow: hidden; background: #fff; border-top: 0; }
.drawing { position: absolute; inset: 0; }
.drawing text { font: 15px Roboto, sans-serif; fill: #808080; }
.drawing .dim { fill: #3a3a3a; }

.measure { position: absolute; width: 73px; height: 22px; padding: 0; border: 1px solid #c4c4c4; outline: 0; background: #fff; font: inherit; color: #383838; text-align: center; }
.measure::selection { background: #0078d7; color: #fff; }
.length { left: calc(50% - 198px); top: calc(50% - 330px); }
.angle { left: calc(50% - 8px); top: calc(50% - 175px); }
.hint { position: absolute; left: calc(50% + 28px); top: calc(50% - 289px); width: 106px; padding: 0 2px; border: 1px solid #666; background: #f0f0f0; font: 11px/13px "Open Sans", sans-serif; color: #111; }

.unsaved { position: absolute; top: 4px; left: 50%; transform: translateX(-50%); display: flex; align-items: center; width: 260px; height: 24px; padding-left: 3px; background: #f1f1f1; white-space: nowrap; }
.unsaved strong { margin-left: 5px; }
.unsaved span { flex: 1; margin-left: 20px; }
.unsaved a { align-self: stretch; width: 51px; padding-left: 12px; border-left: 2px solid #dcdcdc; line-height: 24px; color: #0a74b9; text-decoration: none; }

.browser { position: absolute; top: 4px; left: 4px; width: 300px; }
.panelhead { display: flex; align-items: center; width: 300px; height: 25px; padding: 0 1px 0 4px; border: 1px solid #c4c4c4; background: #f1f1f1; font-size: 10px; color: #666; }
.panelhead span { flex: 1; margin-left: 10px; }
.panelhead .chev { flex: none; }
.grip { flex: none; width: 4px; height: 11px; margin-left: 6px; border: solid #888; border-width: 0 1px; }
.comments { position: absolute; left: 4px; bottom: 4px; }
.comments span { margin-left: 20px; }

.tree { margin: 3px 0 0; padding: 0; list-style: none; }
.tree li { display: flex; align-items: center; height: 24px; }
.fold { margin-right: 8px; }
.root { padding-left: 16px; }
.level1 { padding-left: 34px; }
.level2 { padding-left: 72px; }
.row { display: flex; align-items: center; gap: 9px; height: 20px; padding: 0 10px 0 3px; background: #f1f1f1; white-space: nowrap; }
.label { margin-left: 5px; }
.chip { display: flex; align-items: center; gap: 16px; width: 98px; height: 16px; margin-left: -3px; padding-left: 3px; background: #939393; color: #fff; }
.root .row { gap: 9px; padding-right: 8px; }
.root input { appearance: none; width: 13px; height: 13px; margin: 0 0 0 -5px; border: 1px solid #333; border-radius: 50%; background: radial-gradient(#333 0 2px, #fff 3px); }

.viewcube { position: absolute; top: 15px; right: 10px; }
.viewcube text { font-size: 12px; }
.viewcube .axis { font-size: 14px; }

.palette { position: absolute; top: 124px; right: 4px; width: 250px; border: 1px solid #c4c4c4; background: #f1f1f1; box-shadow: 0 0 2px #ddd; }
.palhead { display: flex; align-items: center; height: 24px; padding: 0 4px 0 1px; border-bottom: 1px solid #c4c4c4; font-size: 10px; color: #666; }
.palhead .grip { margin: 0 5px 0 0; }
.palhead span { flex: 1; margin-left: 4px; }
.palette h2 { display: flex; align-items: center; gap: 6px; height: 30px; margin: 0; padding-left: 9px; font-size: 11px; color: #2e2e2e; }
.palette h2 .caret { border-width: 6px 5px 0; }
.opt { display: flex; align-items: center; height: 30px; padding-left: 12px; }
.opt > :first-child { width: 152px; white-space: nowrap; }
.opt .second { margin-left: 13px; }
.opt input { appearance: none; width: 14px; height: 14px; margin: 0 0 0 1px; border: 1px solid #444; border-radius: 3px; background: linear-gradient(#fafafa, #bcbcbc); }
.opt input:checked { background: url("data:image/svg+xml,%3Csvg xmlns='http://www.w3.org/2000/svg' viewBox='0 0 12 12'%3E%3Cpath d='M2 6l3 3.500 5-8' fill='none' stroke='%23111' stroke-width='1.500'/%3E%3C/svg%3E"), linear-gradient(#b4b4b4, #e6e6e6); }
.palfoot { display: flex; justify-content: flex-end; margin-top: 2px; padding: 8px 11px 7px; border-top: 1px solid #c4c4c4; }
.palfoot button { width: 82px; height: 20px; justify-content: center; border: 1px solid #b4b4b4; font-size: 12px; color: #666; }

.navbar { position: absolute; bottom: 4px; left: 50%; transform: translateX(-50%); display: flex; align-items: center; width: 238px; height: 24px; padding: 0 3px; background: #f1f1f1; }
.navbar button { margin-right: 10px; }
.navbar .drop { margin-right: 6px; }
</style>
